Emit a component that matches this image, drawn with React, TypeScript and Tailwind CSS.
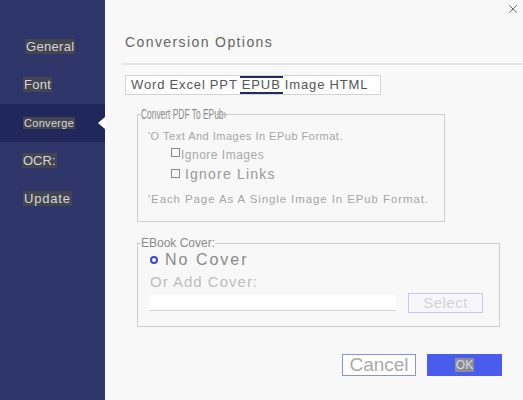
import { X } from 'lucide-react'

const navItems = [
  { label: 'General', active: false, cls: 'pl-[25px] text-[13px] tracking-[0.3px]' },
  { label: 'Font', active: false, cls: 'pl-[23px] text-[13px] tracking-[0.3px]' },
  { label: 'Converge', active: true, cls: 'pl-[23px] text-[11px] tracking-[0.3px]' },
  { label: 'OCR:', active: false, cls: 'pl-[22px] text-[13px]' },
  { label: 'Update', active: false, cls: 'pl-[23px] text-[13px] tracking-[0.8px]' },
]

const tabs = ['Word', 'Excel', 'PPT', 'EPUB', 'Image', 'HTML']

export default function App() {
  return (
    <div
      className="flex w-[523px] h-[400px] overflow-hidden bg-[#f8f8f8]"
      style={{ fontFamily: '"Liberation Sans", Arial, sans-serif' }}
    >
      {/* Sidebar */}
      <div className="w-[105px] shrink-0 bg-[#2e3568] pt-[28px]">
        {navItems.map((item) => (
          <div
            key={item.label}
            className={`relative flex items-center h-[38px] ${item.active ? 'bg-[#20275a]' : ''}`}
          >
            <span className={`${item.cls} text-[#d6d6d6]`}>
              <span className="bg-[#444552] px-[1px]">{item.label}</span>
            </span>
            {item.active && (
              <span className="absolute right-0 top-1/2 -translate-y-1/2 w-0 h-0 border-y-[6px] border-y-transparent border-r-[7px] border-r-white" />
            )}
          </div>
        ))}
      </div>

      {/* Main */}
      <div className="relative flex-1 flex flex-col">
        <button className="absolute right-[3px] top-[2px] text-[#555]">
          <X className="w-[14px] h-[14px]" strokeWidth={1.5} />
        </button>

        <div className="pl-[20px] pt-[34px] text-[14px] tracking-[1.4px] text-[#666] leading-[16px]">
          Conversion Options
        </div>
        <div className="ml-[17px] mt-[13px] h-[2px] bg-[#e6e6e6]" />

        <div className="ml-[20px] mt-[10px] flex w-[256px] h-[20px] border border-[#d4d4d4] bg-white text-[13px] text-[#555] tracking-[0.9px] leading-[18px]">
          <div className="flex pl-[3px]">
            {tabs.map((t) => (
              <span
                key={t}
                className={`px-[2px] ${t === 'EPUB' ? 'border-y-2 border-[#262b5e] leading-[14px]' : ''}`}
              >
                {t}
              </span>
            ))}
          </div>
        </div>

        <fieldset className="ml-[32px] mt-[12px] w-[308px] h-[115px] border border-[#cfcfcf] px-[10px] pb-[8px]">
          <legend className="text-[15px] text-[#8a8a8a] leading-[14px] px-0 -ml-[7px]">
            <span className="inline-block scale-x-[0.56] origin-left w-[74px] whitespace-nowrap">
              Convert PDF To EPub›
            </span>
          </legend>
          <div className="text-[11px] text-[#a6a6a6] tracking-[0.5px] mt-[8px] leading-[14px] whitespace-nowrap">
            'O Text And Images In EPub Format.
          </div>
          <div className="flex items-center ml-[23px] mt-[5px] text-[12px] text-[#a8a8a8] tracking-[0.5px] leading-[14px]">
            <span className="w-[9px] h-[9px] border border-[#888] mr-[1px] -mt-[6px]" />
            Ignore Images
          </div>
          <div className="flex items-center ml-[23px] mt-[5px] text-[14px] text-[#999] tracking-[1.2px] leading-[15px]">
            <span className="w-[9px] h-[9px] border border-[#888] mr-[5px] -mt-[3px]" />
            Ignore Links
          </div>
          <div className="text-[11.5px] text-[#a6a6a6] tracking-[0.9px] mt-[10px] leading-[14px] whitespace-nowrap">
            'Each Page As A Single Image In EPub Format.
          </div>
        </fieldset>

        <fieldset className="ml-[32px] mt-[15px] w-[363px] h-[90px] border border-[#cfcfcf] px-[12px]">
          <legend className="text-[12px] text-[#8a8a8a] leading-[12px] -ml-[9px] px-0">EBook Cover:</legend>
          <div className="flex items-center mt-[2px] text-[16px] text-[#8a8a8a] tracking-[2px] leading-[18px]">
            <span className="w-[8px] h-[8px] rounded-full border-[2px] border-[#3948d8] mr-[7px]" />
            No Cover
          </div>
          <div className="mt-[4px] text-[15px] text-[#bdbdbd] tracking-[1px] leading-[18px]">Or Add Cover:</div>
          <div className="flex items-center mt-[2px]">
            <div className="w-[246px] h-[16px] bg-white border-b border-[#d0d0d0]" />
            <button className="ml-[12px] w-[75px] h-[20px] border border-[#c8c8f0] bg-[#f6f6fb] text-[15px] text-[#d4d4d4] tracking-[0.5px] leading-[18px]">
              Select
            </button>
          </div>
        </fieldset>

        <div className="flex ml-[237px] mt-[27px] gap-[11px]">
          <button className="w-[74px] h-[22px] border border-[#8a8fe8] bg-white text-[19px] text-[#aaa] leading-[20px]">
            Cancel
          </button>
          <button className="w-[75px] h-[22px] bg-[#4a5cee] text-[12px] text-[#ddd] leading-[20px]">
            <span className="bg-[#8a8d96] px-[1px]">OK</span>
          </button>
        </div>
      </div>
    </div>
  )
}
